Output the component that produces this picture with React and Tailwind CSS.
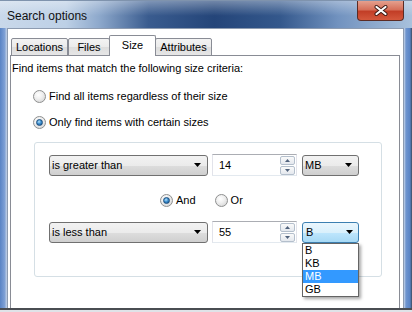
import React from 'react';

const Arrow = () => (
  <svg width="7" height="4" viewBox="0 0 7 4" className="shrink-0">
    <path d="M0 0 H7 L3.5 4 Z" fill="#000" />
  </svg>
);

const Radio = ({ checked }) => (
  <span className="w-[13px] h-[13px] rounded-full border border-[#8e8f8f] bg-[radial-gradient(circle_at_40%_35%,#ffffff_0%,#f0f0f0_40%,#cfcfcf_100%)] flex items-center justify-center shrink-0">
    {checked && (
      <span className="w-[7px] h-[7px] rounded-full border border-[#1c4e7e] bg-[radial-gradient(circle_at_40%_35%,#b8e3fb_0%,#3d8fcf_45%,#134d86_100%)]" />
    )}
  </span>
);

const Combo = ({ label, width, focused }) => (
  <div
    className={
      focused
        ? 'h-[21px] flex items-center justify-between pl-[3px] pr-[5px] rounded-[3px] border border-[#3c7fb1] bg-[linear-gradient(180deg,#eaf6fd_0%,#d9f0fc_50%,#bee6fd_51%,#a7d9f5_100%)]'
        : 'h-[21px] flex items-center justify-between pl-[2px] pr-[6px] rounded-[3px] border border-[#707070] bg-[linear-gradient(180deg,#f2f2f2_0%,#ebebeb_50%,#dddddd_51%,#cfcfcf_100%)]'
    }
    style={{ width }}
  >
    <span className="leading-[14px]">{label}</span>
    <Arrow />
  </div>
);

const Spin = ({ up }) => (
  <div className="w-[15px] h-[9px] rounded-[2px] border border-[#b4bfcc] bg-[linear-gradient(180deg,#fafafa,#e4e8ee)] flex items-center justify-center">
    <svg width="5" height="3" viewBox="0 0 5 3">
      <path d={up ? 'M0 3 L2.5 0 L5 3 Z' : 'M0 0 L5 0 L2.5 3 Z'} fill="#50627c" />
    </svg>
  </div>
);

const NumberField = ({ value }) => (
  <div className="w-[85px] h-[22px] flex items-center justify-between pl-[6px] pr-[1px] border border-[#abadb3] border-l-[#e2e3ea] border-r-[#e2e3ea] border-b-[#e3e9ef] bg-white">
    <span className="leading-[14px]">{value}</span>
    <div className="flex flex-col gap-[1px]">
      <Spin up />
      <Spin />
    </div>
  </div>
);

const Tab = ({ label, width, selected }) =>
  selected ? (
    <div
      className="h-[21px] -mb-px relative z-10 bg-white border border-b-0 border-[#898c95] rounded-t-[2px] flex items-start justify-center pt-[2px]"
      style={{ width }}
    >
      <span className="leading-[14px]">{label}</span>
    </div>
  ) : (
    <div
      className="h-[18px] -mb-px border border-[#898c95] rounded-t-[2px] bg-[linear-gradient(180deg,#f3f3f3_0%,#ebebeb_50%,#dddddd_51%,#e6e6e6_100%)] flex items-center justify-center"
      style={{ width }}
    >
      <span className="leading-[14px]">{label}</span>
    </div>
  );

const units = ['B', 'KB', 'MB', 'GB'];

export default function App() {
  return (
    <div className="w-[412px] h-[312px] overflow-hidden bg-[#dfe3e8] text-[11px] text-black font-['Liberation_Sans',Arial,sans-serif]">
      <div className="h-[310px] flex flex-col border-b-2 border-[#4a4d52]">
        {/* title bar */}
        <div className="h-[28px] shrink-0 flex items-start justify-between pl-[7px] pr-[8px] bg-[linear-gradient(180deg,rgba(255,255,255,0.35)_0%,rgba(255,255,255,0.12)_35%,rgba(255,255,255,0)_55%),linear-gradient(90deg,#c9d8ea_0%,#bdd0e6_16%,#8ea9cc_24%,#3a5c8f_36%,#244579_52%,#34588c_68%,#7192bf_82%,#a9c1dc_100%)] border-t border-[#7f93ad]">
          <span className="mt-[8px] text-[12px] leading-[14px] text-[#111]">Search options</span>
          <div className="w-[47px] h-[20px] rounded-b-[4px] border border-t-0 border-[#5b2b24] bg-[linear-gradient(180deg,#e5a08e_0%,#d6705a_45%,#c23e27_55%,#d4583c_100%)] flex items-center justify-center">
            <svg width="14" height="11" viewBox="0 0 14 11">
              <path d="M2.5 2 L11.5 9 M11.5 2 L2.5 9" stroke="#3a1712" strokeWidth="4" strokeLinecap="round" />
              <path d="M2.5 2 L11.5 9 M11.5 2 L2.5 9" stroke="#ffffff" strokeWidth="2.2" strokeLinecap="round" />
            </svg>
          </div>
        </div>

        {/* body */}
        <div className="flex-1 flex min-h-0">
          <div className="w-[7px] bg-[linear-gradient(90deg,#5a84c5_0%,#7ea0d5_65%,#c5d3e7_100%)]" />
          <div className="flex-1 flex flex-col border border-b-0 border-[#8d9bb0] bg-white">
            {/* tabs */}
            <div className="flex items-end pl-[3px] pt-[5px] h-[26px] shrink-0">
              <Tab label="Locations" width="57px" />
              <Tab label="Files" width="42px" />
              <div className="-ml-px">
                <Tab label="Size" width="47px" selected />
              </div>
              <div className="-ml-px">
                <Tab label="Attributes" width="57px" />
              </div>
            </div>

            {/* panel */}
            <div className="flex-1 ml-[2px] mr-[3px] border border-b-0 border-[#898c95] bg-white pt-[5px] flex flex-col">
              <p className="pl-[1px] leading-[14px]">Find items that match the following size criteria:</p>

              <div className="mt-[14px] pl-[22px] flex items-center gap-[3px] h-[14px]">
                <Radio />
                <span className="leading-[14px]">Find all items regardless of their size</span>
              </div>
              <div className="mt-[12px] pl-[22px] flex items-center gap-[3px] h-[14px]">
                <Radio checked />
                <span className="leading-[14px]">Only find items with certain sizes</span>
              </div>

              {/* group */}
              <div className="mt-[13px] ml-[23px] w-[348px] h-[135px] border border-[#d5dfe5] rounded-[3px] pl-[14px] pt-[11px] flex flex-col">
                <div className="flex items-center gap-[4px]">
                  <Combo label="is greater than" width="159px" />
                  <NumberField value="14" />
                  <div className="ml-[1px]">
                    <Combo label="MB" width="57px" />
                  </div>
                </div>

                <div className="mt-[17px] pl-[111px] flex items-center h-[14px]">
                  <Radio checked />
                  <span className="ml-[3px] leading-[14px]">And</span>
                  <span className="ml-[19px]">
                    <Radio />
                  </span>
                  <span className="ml-[3px] leading-[14px]">Or</span>
                </div>

                <div className="mt-[14px] flex items-center gap-[4px]">
                  <Combo label="is less than" width="159px" />
                  <NumberField value="55" />
                  <div className="ml-[1px] relative">
                    <Combo label="B" width="57px" focused />
                    <div className="absolute left-0 top-[21px] w-[57px] border border-[#646464] bg-white shadow-[2px_2px_3px_rgba(0,0,0,0.35)] z-20">
                      {units.map((u) => (
                        <div
                          key={u}
                          className={
                            u === 'MB'
                              ? 'h-[13px] leading-[13px] pl-[2px] bg-[#3399ff] text-white'
                              : 'h-[13px] leading-[13px] pl-[2px]'
                          }
                        >
                          {u}
                        </div>
                      ))}
                    </div>
                  </div>
                </div>
              </div>
            </div>
          </div>
          <div className="w-[8px] bg-[linear-gradient(90deg,#c5d3e7_0%,#6f95cf_25%,#5a84c5_75%,#3d4a5e_100%)]" />
        </div>
      </div>
    </div>
  );
}
